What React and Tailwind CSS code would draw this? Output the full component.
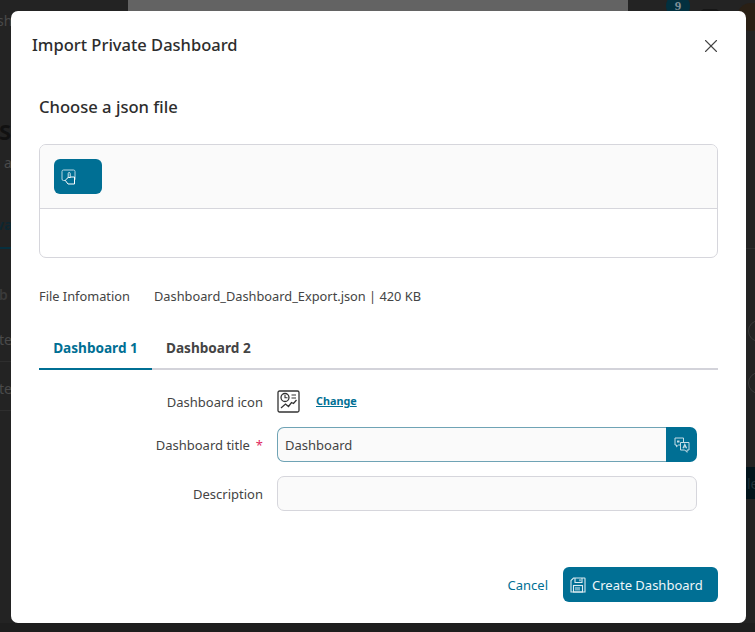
import React from 'react';
import { X } from 'lucide-react';

const TEAL = 'bg-[#006f94]';

function PickIcon() {
  return (
    <svg width="16" height="16" viewBox="0 0 16 16" fill="none" stroke="#b9d6e1" strokeWidth="1">
      <path d="M4.500 11.500H2.500A1.500 1.500 0 0 1 1 10V2.500A1.500 1.500 0 0 1 2.500 1h10A1.500 1.500 0 0 1 14 2.500V10a1.500 1.500 0 0 1-1.500 1.500" />
      <path d="M7.200 9V4.500a1 1 0 0 1 2 0V9" stroke="#d5e8ef" />
      <path d="M4.200 11.300 7.200 8.500h1.800l1-.5h3.500V15H7z" fill="#006f94" stroke="#ffffff" />
    </svg>
  );
}

function TranslateIcon() {
  return (
    <svg width="16" height="16" viewBox="0 0 16 16" fill="none" stroke="#c5dde6" strokeWidth="1">
      <path d="M1 1h8.500v7H4.500L2.500 9.800V8H1z" />
      <path d="M3 3.500h2.500v2H3z" fill="#c5dde6" stroke="none" />
      <path d="M6.500 5.500h8.500v7.500h-2v2.300L10.800 13H6.500z" fill="#006f94" />
      <path d="M9 11.300 10.800 7.500l1.800 3.800M9.700 10h2.200" strokeWidth="1.200" />
    </svg>
  );
}

function SaveIcon() {
  return (
    <svg width="16" height="16" viewBox="0 0 16 16" fill="none" stroke="#dcebf1" strokeWidth="1.100">
      <path d="M3.500 1h11a.500.500 0 0 1 .500.500V15H1V3.500z" />
      <path d="M5 1v4.500h7V1M10 2.300v2" />
      <rect x="3.500" y="8.500" width="9" height="6.500" />
      <rect x="5" y="10" width="5" height="3.500" fill="#dcebf1" fillOpacity="0.5" stroke="none" />
    </svg>
  );
}

function DashIcon() {
  return (
    <svg width="23" height="23" viewBox="0 0 23 23" fill="none" stroke="#333333">
      <rect x="1" y="1" width="21" height="21" rx="1.500" strokeWidth="1.300" />
      <circle cx="8" cy="7.500" r="4" strokeWidth="1.300" />
      <path d="M8 5v2.800h2.500" strokeWidth="1.100" />
      <path d="M14.500 5h4.500M14.500 8h4.500" strokeWidth="1.200" />
      <path d="M4 18l4.500-4 3 2.500 3-4 2 1 3-3.500" strokeWidth="1.300" />
    </svg>
  );
}

// what shows around the dialog, dimmed by the overlay
function Backdrop() {
  return (
    <div className="absolute inset-0 overflow-hidden bg-[#232323] text-[#4a4a4a]">
      <div className="absolute left-[128px] top-0 h-[12px] w-[500px] bg-[#636363]" />
      <div className="absolute left-[-3px] top-[10px] text-[14px]">sh</div>
      <div className="absolute left-[-1px] top-[115px] text-[22px] font-bold text-[#111]">S</div>
      <div className="absolute left-[4px] top-[152px] text-[14px]">a</div>
      <div className="absolute left-[-4px] top-[214px] text-[14px] font-bold text-[#0d2630]">va</div>
      <div className="absolute left-0 top-[247px] h-[2px] w-[11px] bg-[#07303f]" />
      <div className="absolute left-[-1px] top-[284px] text-[14px] font-semibold text-[#3a3a3a]">b</div>
      <div className="absolute left-[-1px] top-[329px] text-[14px]">te</div>
      <div className="absolute left-0 top-[361px] h-px w-[11px] bg-[#2e2e2e]" />
      <div className="absolute left-[-1px] top-[378px] text-[14px]">te</div>
      <div className="absolute left-0 top-[410px] h-px w-[11px] bg-[#2e2e2e]" />
      <div className="absolute left-[666px] top-[-6px] flex h-[24px] w-[24px] items-center justify-center rounded-full bg-[#02303f] font-['Liberation_Serif',serif] text-[13px] font-bold text-[#7f8f96]">9</div>
      <div className="absolute left-[700px] top-[9px] h-[10px] w-[20px] rounded-full bg-[#161616]" />
      <div className="absolute left-[737px] top-[3px] h-[28px] w-[28px] rounded-full bg-[#2a2015]" />
      <div className="absolute left-[746px] top-[248px] h-px w-[9px] bg-[#2e2e2e]" />
      <div className="absolute left-[748px] top-[320px] h-[22px] w-[22px] rounded-full border border-[#3a3a3a]" />
      <div className="absolute left-[748px] top-[372px] h-[22px] w-[22px] rounded-full border border-[#3a3a3a]" />
      <div className="absolute left-[746px] top-[467px] flex h-[32px] w-[9px] items-center overflow-hidden bg-[#02141b] text-[14px] text-[#1f3038]">
        <span className="ml-[1px]">le</span>
      </div>
      <div className="absolute left-0 top-[623px] h-[9px] w-full bg-[#1e1e1e]" />
    </div>
  );
}

function Row({ label, required, children }) {
  return (
    <div className="flex items-center">
      <label className="w-[238px] pt-[2px] pr-[14px] text-right text-[13px] text-[#444]">
        {label}
        {required && <span className="ml-[6px] text-[#e0295f]">*</span>}
      </label>
      {children}
    </div>
  );
}

export default function App() {
  return (
    <div className="relative h-[632px] w-[755px] overflow-hidden font-['Noto_Sans',sans-serif]">
      <Backdrop />
      <div className="absolute left-[11px] top-[11px] flex h-[612px] w-[735px] flex-col rounded-[7px] bg-white">
        <div className="flex h-[67px] shrink-0 items-center justify-between pl-[21px] pr-[24px]">
          <h2 className="pt-[1px] text-[16.500px] font-medium text-[#2d2d2d]">Import Private Dashboard</h2>
          <X size={22} strokeWidth={1.200} className="mt-[2px] text-[#444]" />
        </div>

        <div className="px-[28px]">
          <h3 className="mt-[15px] h-[27px] text-[16.600px] leading-[27px] font-medium text-[#2d2d2d]">Choose a json file</h3>

          <div className="mt-[24px] overflow-hidden rounded-[7px] border border-[#d6d6dc]">
            <div className="flex h-[64px] items-center border-b border-[#d6d6dc] bg-[#fafafa] pl-[14px]">
              <button className={`flex h-[35px] w-[48px] items-center rounded-[6px] pl-[7px] ${TEAL}`}>
                <PickIcon />
              </button>
            </div>
            <div className="h-[48px]" />
          </div>

          <div className="mt-[29px] flex text-[12.800px] leading-[18px] text-[#444]">
            <span className="w-[115px]">File Infomation</span>
            <span>Dashboard_Dashboard_Export.json | 420 KB</span>
          </div>

          <div className="mt-[20px] flex h-[45px] border-b-2 border-[#d3d3da] text-[13.600px] font-bold">
            <div className="-mb-[2px] flex h-[45px] w-[113px] items-center justify-center border-b-2 border-[#006f94] pt-[3px] text-[#006f94]">
              Dashboard 1
            </div>
            <div className="flex items-center px-[14px] pt-[3px] text-[#444]">
              Dashboard 2
            </div>
          </div>

          <div className="mt-[20px] flex flex-col gap-[14px]">
            <Row label="Dashboard icon">
              <DashIcon />
              <a className="ml-[16px] text-[10.800px] font-bold text-[#006f94] underline">Change</a>
            </Row>
            <Row label="Dashboard title" required>
              <div className="flex h-[35px] w-[420px]">
                <div className="flex flex-1 items-center rounded-l-[7px] border border-r-0 border-[#6fa3b5] bg-[#fafafa] pt-[2px] pl-[7px] text-[13px] text-[#444]">Dashboard</div>
                <button className={`flex w-[31px] items-center justify-center rounded-r-[7px] ${TEAL}`}>
                  <TranslateIcon />
                </button>
              </div>
            </Row>
            <Row label="Description">
              <div className="h-[35px] w-[420px] rounded-[7px] border border-[#d6d6dc] bg-[#fafafa]" />
            </Row>
          </div>
        </div>

        <div className="mt-auto flex items-center justify-end gap-[15px] pr-[28px] pb-[21px]">
          <a className="pt-[2px] text-[13px] text-[#006f94]">Cancel</a>
          <button className={`flex h-[35px] w-[155px] items-center gap-[6px] rounded-[6px] pl-[7px] text-[13px] text-[#eef6f9] ${TEAL}`}>
            <SaveIcon />
            <span className="pt-[2px]">Create Dashboard</span>
          </button>
        </div>
      </div>
    </div>
  );
}
